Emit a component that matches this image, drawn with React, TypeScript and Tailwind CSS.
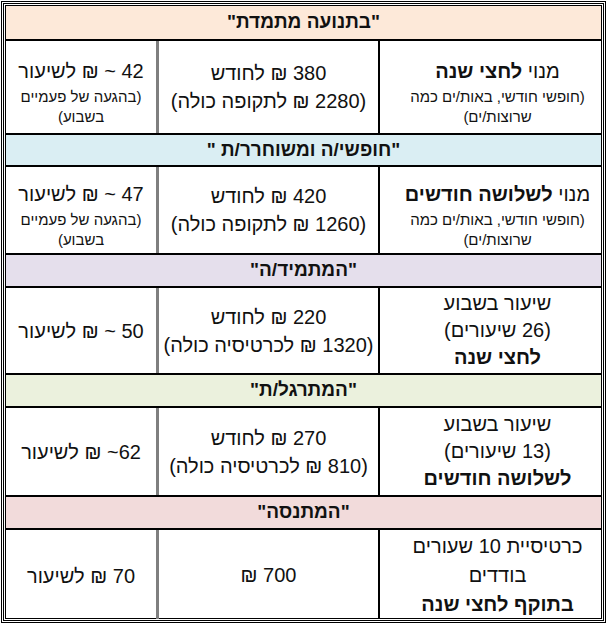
import React from 'react';

type Plan = {
  title: string;
  bg: string;
  head: string;
  height: string;
  pad: string;
  right: React.ReactNode;
  middle: React.ReactNode;
  left: React.ReactNode;
};

const plans: Plan[] = [
  {
    title: '"בתנועה מתמדת"',
    bg: 'bg-[#fde9d9]',
    head: 'h-[33px]',
    height: 'h-[94px]',
    pad: 'pt-[7px]',
    right: (
      <>
        <div className="text-[20px] leading-[32px]">
          מנוי <span className="font-bold">לחצי שנה</span>
        </div>
        <div className="text-[15px] leading-[20px]">(חופשי חודשי, באות/ים כמה שרוצות/ים)</div>
      </>
    ),
    middle: (
      <div className="text-[20px] leading-[28px]">
        <div>380 ₪ לחודש</div>
        <div>(2280 ₪ לתקופה כולה)</div>
      </div>
    ),
    left: (
      <>
        <div className="text-[20px] leading-[32px]">42 ~ ₪ לשיעור</div>
        <div className="text-[15px] leading-[20px]">(בהגעה של פעמיים בשבוע)</div>
      </>
    ),
  },
  {
    title: '"חופשי/ה ומשוחרר/ת "',
    bg: 'bg-[#daeef3]',
    head: 'h-[32px]',
    height: 'h-[88px]',
    pad: 'pt-[7px]',
    right: (
      <>
        <div className="text-[20px] leading-[32px]">
          מנוי <span className="font-bold">לשלושה חודשים</span>
        </div>
        <div className="text-[15px] leading-[20px]">(חופשי חודשי, באות/ים כמה שרוצות/ים)</div>
      </>
    ),
    middle: (
      <div className="text-[20px] leading-[28px]">
        <div>420 ₪ לחודש</div>
        <div>(1260 ₪ לתקופה כולה)</div>
      </div>
    ),
    left: (
      <>
        <div className="text-[20px] leading-[32px]">47 ~ ₪ לשיעור</div>
        <div className="text-[15px] leading-[20px]">(בהגעה של פעמיים בשבוע)</div>
      </>
    ),
  },
  {
    title: '"המתמיד/ה"',
    bg: 'bg-[#e5dfec]',
    head: 'h-[33px]',
    height: 'h-[87px]',
    pad: '',
    right: (
      <div className="text-[20px] leading-[27px]">
        <div>שיעור בשבוע</div>
        <div>(26 שיעורים)</div>
        <div className="font-bold">לחצי שנה</div>
      </div>
    ),
    middle: (
      <div className="text-[20px] leading-[28px]">
        <div>220 ₪ לחודש</div>
        <div>(1320 ₪ לכרטיסיה כולה)</div>
      </div>
    ),
    left: <div className="text-[20px]">50 ~ ₪ לשיעור</div>,
  },
  {
    title: '"המתרגל/ת"',
    bg: 'bg-[#ebf1dd]',
    head: 'h-[33px]',
    height: 'h-[89px]',
    pad: '',
    right: (
      <div className="text-[20px] leading-[27px]">
        <div>שיעור בשבוע</div>
        <div>(13 שיעורים)</div>
        <div className="font-bold">לשלושה חודשים</div>
      </div>
    ),
    middle: (
      <div className="text-[20px] leading-[28px]">
        <div>270 ₪ לחודש</div>
        <div>(810 ₪ לכרטיסיה כולה)</div>
      </div>
    ),
    left: <div className="text-[20px]">62~ ₪ לשיעור</div>,
  },
  {
    title: '"המתנסה"',
    bg: 'bg-[#f2dbdb]',
    head: 'h-[33px]',
    height: 'flex-1',
    pad: 'pt-[2px]',
    right: (
      <div className="text-[20px] leading-[29px]">
        <div>כרטיסיית 10 שעורים</div>
        <div>בודדים</div>
        <div className="font-bold">בתוקף לחצי שנה</div>
      </div>
    ),
    middle: <div className="text-[20px]">700 ₪</div>,
    left: <div className="text-[20px]">70 ₪ לשיעור</div>,
  },
];

export default function App() {
  return (
    <div className="w-[607px] h-[624px] bg-white p-px font-['Liberation_Sans','DejaVu_Sans',sans-serif] text-[#111]">
      <div className="h-full border border-black p-px">
        <div className="h-full border border-black p-px">
          <div className="h-full border border-black flex flex-col" dir="rtl">
            {plans.map((plan, i) => (
              <React.Fragment key={i}>
                <div
                  className={`${plan.bg} ${plan.head} ${i > 0 ? 'border-t-2 border-black' : ''} shrink-0 flex items-center justify-center text-[19px] font-bold`}
                >
                  {plan.title}
                </div>
                <div className={`${plan.height} shrink-0 border-t-2 border-black grid grid-cols-[223px_222px_1fr]`}>
                  {/* Word keeps the first column's text a little off its centre */}
                  <div className={`${plan.pad} flex flex-col items-center justify-center text-center border-l-2 border-black pl-[19px] pr-[5px]`}>
                    {plan.right}
                  </div>
                  <div className="flex flex-col items-center justify-center text-center border-l-[3px] border-[#7f7f7f]">
                    {plan.middle}
                  </div>
                  <div className={`${plan.pad} flex flex-col items-center justify-center text-center px-3`}>
                    {plan.left}
                  </div>
                </div>
              </React.Fragment>
            ))}
          </div>
        </div>
      </div>
    </div>
  );
}
